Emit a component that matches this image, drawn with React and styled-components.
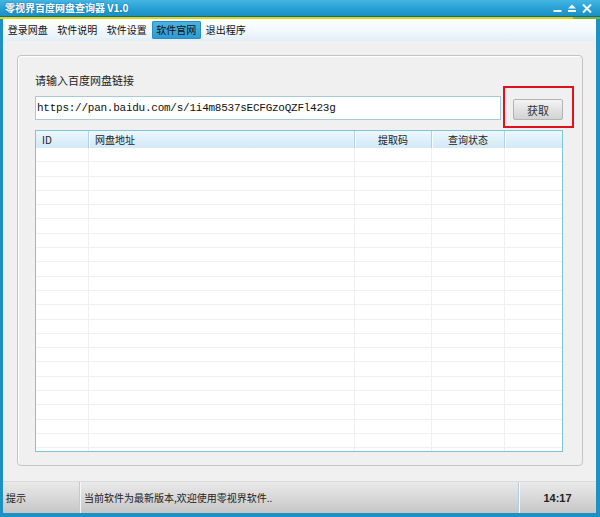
import React from 'react';
import styled, { createGlobalStyle } from 'styled-components';

const GlobalStyle = createGlobalStyle`
  html, body {
    margin: 0;
    padding: 0;
    width: 600px;
    height: 517px;
    overflow: hidden;
    background: #1e92c7;
  }
  * { box-sizing: border-box; }
`;

const CJK = `"Noto Sans CJK SC", "Liberation Sans", sans-serif`;

const Window = styled.div`
  width: 600px;
  height: 517px;
  display: flex;
  flex-direction: column;
  background: #1d91c6;
  font-family: ${CJK};
`;

const TitleBar = styled.div`
  height: 17px;
  display: flex;
  align-items: center;
  justify-content: space-between;
  padding: 0 8px 0 5px;
  background: linear-gradient(#44b6e2, #2aa2d6 50%, #1a8fc5);
  border-bottom: 1px solid #13679c;
`;

const Title = styled.div`
  color: #ffffff;
  font-size: 10px;
  font-weight: bold;
  line-height: 12px;
  text-shadow: 0 0 2px rgba(0, 60, 110, 0.6);
`;

const Controls = styled.div`
  display: flex;
  align-items: center;
  gap: 5px;
  padding-top: 1px;
`;

const Accent = styled.div`
  height: 2px;
  background: linear-gradient(90deg, #e3d700 0, #e3d700 95.5%, #7ab82a 95.5%);
`;

const Frame = styled.div`
  flex: 1;
  display: flex;
  flex-direction: column;
  margin: 0 4px 4px 3px;
  background: #f0f0f0;
  min-height: 0;
`;

const MenuBar = styled.div`
  height: 22px;
  display: flex;
  align-items: center;
  background: linear-gradient(#ffffff, #f3f9fd 50%, #e2eff8);
`;

const MenuItem = styled.div`
  width: 49.5px;
  height: 18px;
  display: flex;
  align-items: center;
  justify-content: center;
  font-size: 10px;
  line-height: 12px;
  color: #111;
  border-radius: 2px;
  background: ${p => (p.$active ? 'linear-gradient(#4bb5e4, #2b9ad3)' : 'transparent')};
  box-shadow: ${p => (p.$active ? 'inset 0 0 0 1px #2a8cc2' : 'none')};
`;

const Body = styled.div`
  flex: 1;
  display: flex;
  padding: 14px 13px 15px 14px;
  min-height: 0;
`;

const GroupBox = styled.div`
  flex: 1;
  display: flex;
  flex-direction: column;
  border: 1px solid #c4c4c4;
  border-radius: 4px;
  box-shadow: inset 1px 1px 0 #ffffff;
  padding: 17px 19px 13px 17px;
  min-height: 0;
`;

const Label = styled.div`
  font-size: 11px;
  line-height: 14px;
  color: #222;
  margin-bottom: 9px;
`;

const InputRow = styled.div`
  display: flex;
  align-items: flex-end;
  gap: 12px;
  height: 24px;
  margin-bottom: 10px;
`;

const UrlInput = styled.input`
  flex: 1;
  height: 24px;
  border: 1px solid #a9cadb;
  background: #ffffff;
  padding: 0 0 0 1px;
  font-family: "Liberation Mono", monospace;
  font-size: 11px;
  letter-spacing: -0.25px;
  color: #111;
  outline: none;
`;

const ButtonWrap = styled.div`
  position: relative;
  &::after {
    content: '';
    position: absolute;
    left: -10px;
    right: -11px;
    top: -13px;
    bottom: -8px;
    border: 2px solid #e2121c;
    pointer-events: none;
  }
`;

const FetchButton = styled.button`
  width: 50px;
  height: 21px;
  display: flex;
  align-items: center;
  justify-content: center;
  padding: 0;
  border: 1px solid #b3b3b3;
  border-radius: 2px;
  background: linear-gradient(#f4f4f4, #e2e2e2 50%, #d3d3d3);
  font-family: ${CJK};
  font-size: 11px;
  color: #333;
`;

const Table = styled.div`
  flex: 1;
  display: flex;
  flex-direction: column;
  border: 1px solid #7ec4d7;
  background: #ffffff;
  overflow: hidden;
  min-height: 0;
`;

const COLS = '53px 266px 77px 73px 1fr';

const HeaderRow = styled.div`
  display: grid;
  grid-template-columns: ${COLS};
  height: 17px;
  flex-shrink: 0;
  background: linear-gradient(#eef7fd, #dbeefa 60%, #d3e9f8);
`;

const HeaderCell = styled.div`
  display: flex;
  align-items: center;
  justify-content: ${p => (p.$center ? 'center' : 'flex-start')};
  padding-left: ${p => (p.$center ? '0' : '6px')};
  font-size: 10px;
  line-height: 12px;
  color: #222;
  border-right: 1px solid #b7d0e1;
  box-shadow: 1px 0 0 #f6fbff;
  &:last-child {
    border-right: none;
    box-shadow: none;
  }
`;

const Row = styled.div`
  display: grid;
  grid-template-columns: ${COLS};
  height: 14.3px;
  flex-shrink: 0;
  border-bottom: 1px solid #f0f0f0;
`;

const Cell = styled.div`
  border-right: 1px solid #f0f0f0;
  &:last-child { border-right: none; }
`;

const StatusBar = styled.div`
  height: 32px;
  display: flex;
  align-items: stretch;
  background: linear-gradient(#e9e9e9, #dcdcdc 40%, #c6c6c6);
  border-top: 1px solid #dadada;
  font-size: 10px;
  line-height: 12px;
  color: #222;
`;

const StatusCell = styled.div`
  display: flex;
  align-items: center;
  justify-content: ${p => (p.$center ? 'center' : 'flex-start')};
  width: ${p => p.$width || 'auto'};
  flex: ${p => (p.$grow ? 1 : 'none')};
  padding-left: ${p => p.$pad || '0'};
  border-left: ${p => (p.$sep ? '1px solid #b5cde0' : 'none')};
  box-shadow: ${p => (p.$sep ? 'inset 1px 0 0 #f4f8fb' : 'none')};
`;

const Clock = styled.span`
  font-family: "Liberation Sans", sans-serif;
  font-weight: bold;
  font-size: 11px;
  color: #222;
`;

const Minimize = () => (
  <svg width="9" height="10" viewBox="0 0 9 10">
    <rect x="0.5" y="6" width="8" height="2" fill="#eef8fc" />
  </svg>
);

const Restore = () => (
  <svg width="10" height="10" viewBox="0 0 10 10">
    <path d="M5 0.5 L9 4.5 L1 4.5 Z" fill="#eef8fc" />
    <rect x="1" y="6" width="8" height="2" fill="#eef8fc" />
  </svg>
);

const Close = () => (
  <svg width="10" height="10" viewBox="0 0 10 10">
    <path d="M1 0.5 L9 8.5 M9 0.5 L1 8.5" stroke="#eef8fc" strokeWidth="2" />
  </svg>
);

const menus = ['登录网盘', '软件说明', '软件设置', '软件官网', '退出程序'];
const columns = [
  { name: 'ID' },
  { name: '网盘地址' },
  { name: '提取码', center: true },
  { name: '查询状态', center: true },
  { name: '' },
];

export default function App() {
  const rows = Array.from({ length: 22 });
  return (
    <>
      <GlobalStyle />
      <Window>
        <TitleBar>
          <Title>零视界百度网盘查询器 V1.0</Title>
          <Controls>
            <Minimize />
            <Restore />
            <Close />
          </Controls>
        </TitleBar>
        <Accent />
        <Frame>
          <MenuBar>
            {menus.map(m => (
              <MenuItem key={m} $active={m === '软件官网'}>{m}</MenuItem>
            ))}
          </MenuBar>
          <Body>
            <GroupBox>
              <Label>请输入百度网盘链接</Label>
              <InputRow>
                <UrlInput readOnly value="https://pan.baidu.com/s/1i4m8537sECFGzoQZFl423g" />
                <ButtonWrap>
                  <FetchButton>获取</FetchButton>
                </ButtonWrap>
              </InputRow>
              <Table>
                <HeaderRow>
                  {columns.map((c, i) => (
                    <HeaderCell key={i} $center={c.center}>{c.name}</HeaderCell>
                  ))}
                </HeaderRow>
                {rows.map((_, i) => (
                  <Row key={i}>
                    {columns.map((c, j) => <Cell key={j} />)}
                  </Row>
                ))}
              </Table>
            </GroupBox>
          </Body>
          <StatusBar>
            <StatusCell $width="76px" $pad="3px">提示</StatusCell>
            <StatusCell $grow $sep $pad="4px">当前软件为最新版本,欢迎使用零视界软件..</StatusCell>
            <StatusCell $width="78px" $sep $center><Clock>14:17</Clock></StatusCell>
          </StatusBar>
        </Frame>
      </Window>
    </>
  );
}
